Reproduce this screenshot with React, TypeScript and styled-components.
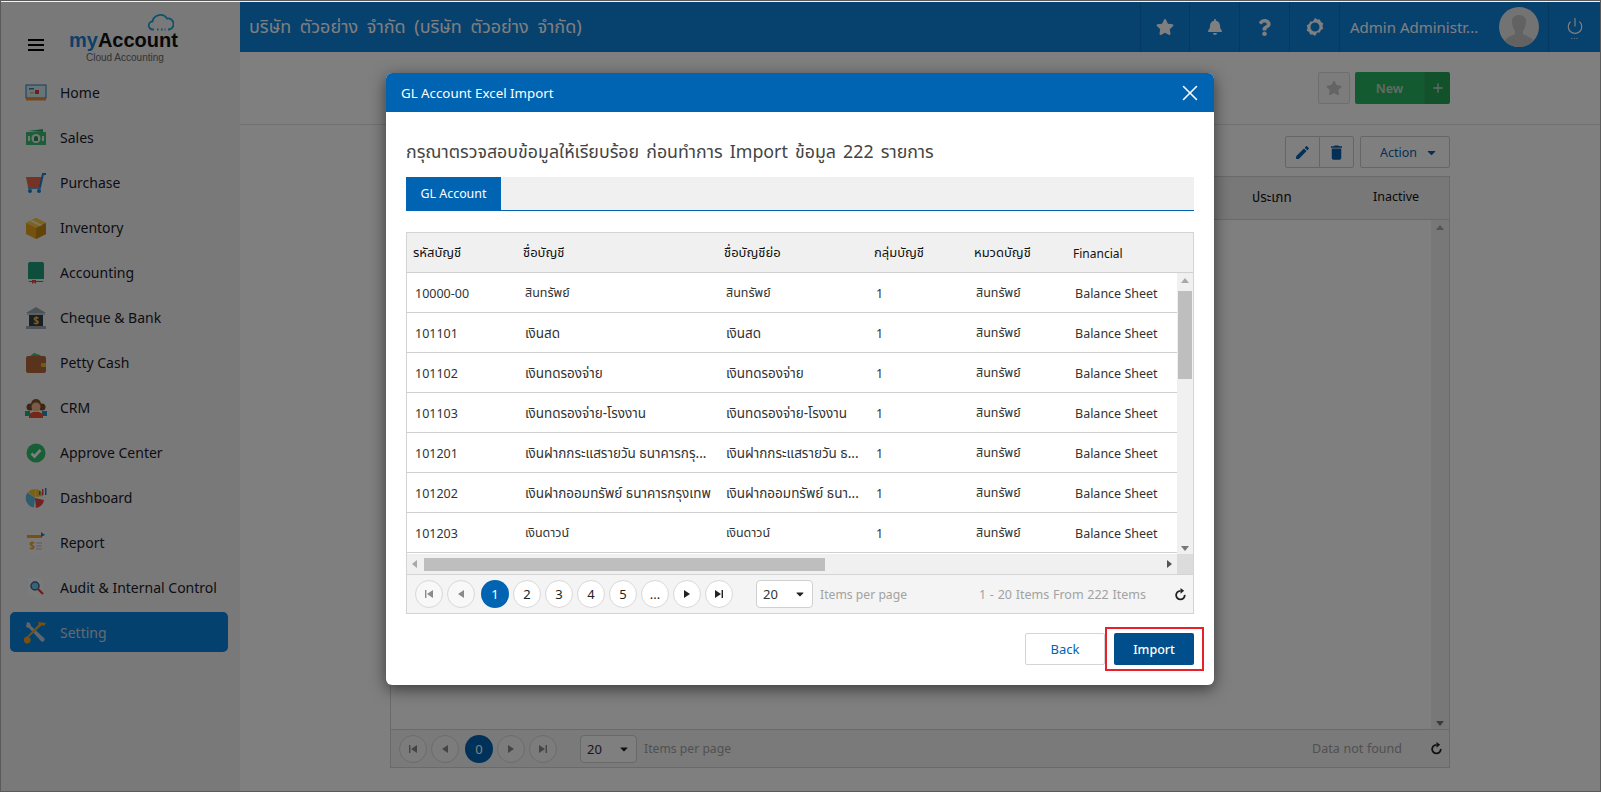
import React from "react";
import styled, { createGlobalStyle, css } from "styled-components";
import { FaStar, FaBell, FaQuestion, FaCaretDown } from "react-icons/fa";
import { MdEdit, MdDelete, MdAdd } from "react-icons/md";
import { Power, X } from "lucide-react";

const FONT = `"Noto Sans", "Noto Sans Thai", "Open Sans", "DejaVu Sans", sans-serif`;

const Global = createGlobalStyle`
  html, body { margin: 0; padding: 0; height: 792px; overflow: hidden; background: #fff; }
  * { box-sizing: border-box; }
  body { font-family: ${FONT}; font-size: 13px; color: #333; }
`;

const Frame = styled.div`
  width: 1601px; height: 792px; display: flex; flex-direction: column;
  border: 1px solid #5a5a5a; background: #fff; overflow: hidden;
`;
const Strip = styled.div`height: 1px; flex: none; background: #f4f4f4;`;
const Shell = styled.div`position: relative; flex: 1; display: flex; min-height: 0;`;
const Overlay = styled.div`position: absolute; inset: 0; background: rgba(0,0,0,.5); z-index: 5;`;

const Side = styled.aside`width: 239px; flex: none; background: #f3f3f3; display: flex; flex-direction: column; padding: 0 12px 0 9px;`;
const Brand = styled.div`height: 68px; display: flex; align-items: center; padding-left: 18px; flex: none;`;
const Burger = styled.div`
  width: 16px; height: 12px; margin-top: 17px; flex: none;
  border-top: 2px solid #000; border-bottom: 2px solid #000; position: relative;
  &::after { content: ""; position: absolute; left: 0; right: 0; top: 3px; height: 2px; background: #000; }
`;
const Logo = styled.div`position: relative; margin-left: 25px; margin-top: 24px; width: 112px; height: 40px;`;
const LogoName = styled.div`font: bold 20px/24px "Liberation Sans", sans-serif; color: #111; white-space: nowrap; span { color: #1a7fd0; }`;
const LogoSub = styled.div`font: 10px/12px "Liberation Sans", sans-serif; color: #666; padding-left: 17px; white-space: nowrap;`;
const CloudMark = styled.svg`position: absolute; left: 79px; top: -15px;`;
const Nav = styled.nav`display: flex; flex-direction: column; flex: none;`;
const NavItem = styled.div<{ $on?: boolean }>`
  height: 45px; display: flex; align-items: center; padding-left: 14px; gap: 12px;
  font-size: 14px; color: #1a1a2a; border-radius: 5px; white-space: nowrap;
  ${p => p.$on && css`height: 40px; margin-top: 2px; background: #0a82de; color: #c8d6e0;`}
`;
const NavIcon = styled.svg`width: 24px; height: 24px; flex: none;`;

const Main = styled.main`flex: 1; min-width: 0; display: flex; flex-direction: column; background: #fff;`;
const Top = styled.header`height: 50px; flex: none; background: #0e82dc; display: flex; align-items: stretch;`;
const Company = styled.div`flex: 1; min-width: 0; display: flex; align-items: center; padding: 0 0 0 9px; font-size: 18px; word-spacing: 4px; color: #fff; white-space: nowrap;`;
const TopBtn = styled.div<{ $w: number }>`
  width: ${p => p.$w}px; flex: none; border-left: 1px solid #0b72c4; display: flex; align-items: center; justify-content: center; color: #fff;
`;
const UserBox = styled.div`width: 210px; flex: none; border-left: 1px solid #0b72c4; border-right: 1px solid #0b72c4; display: flex; align-items: center; padding-left: 10px; color: #fff; font-size: 15px; white-space: nowrap;`;
const Avatar = styled.svg`width: 40px; height: 40px; margin-left: auto; margin-right: 9px; border-radius: 50%; flex: none;`;
const PowerBox = styled.div`width: 51px; flex: none; display: flex; flex-direction: column; align-items: center; justify-content: center; color: #fff;`;
const Dots = styled.span`font-size: 8px; line-height: 4px; letter-spacing: .5px; margin-top: -1px;`;

const Bar = styled.div`height: 73px; flex: none; border-bottom: 1px solid #e3e3e3; display: flex; justify-content: flex-end; align-items: flex-start; padding: 20px 150px 0 0;`;
const FavBtn = styled.div`width: 32px; height: 32px; border: 1px solid #ddd; background: #f8f8f8; border-radius: 2px; color: #c9c9c9; display: flex; align-items: center; justify-content: center; margin-right: 5px;`;
const NewBtn = styled.div`width: 70px; height: 32px; background: #26b561; color: #c9d5c9; font-weight: 600; font-size: 12.5px; display: flex; align-items: center; justify-content: center; border-radius: 2px 0 0 2px; border-right: 1px solid #2ea760;`;
const PlusBtn = styled.div`width: 25px; height: 32px; background: #22a456; color: #c9d5c9; display: flex; align-items: center; justify-content: center; border-radius: 0 2px 2px 0;`;

const Content = styled.div`flex: 1; padding: 11px 150px 0; display: flex; flex-direction: column; min-height: 0;`;
const Tools = styled.div`height: 32px; flex: none; display: flex; justify-content: flex-end;`;
const IconBtn = styled.div<{ $last?: boolean }>`
  width: 35px; height: 32px; border: 1px solid #ccc; color: #0a5ea8; display: flex; align-items: center; justify-content: center;
  margin-left: ${p => p.$last ? "-1px" : "0"}; border-radius: ${p => p.$last ? "0 2px 2px 0" : "2px 0 0 2px"};
`;
const ActionBtn = styled.div`width: 90px; height: 32px; margin-left: 6px; border: 1px solid #ccc; border-radius: 2px; color: #0a5ea8; display: flex; align-items: center; justify-content: flex-end; gap: 8px; padding-right: 11px; font-size: 12.5px;`;
const BackTable = styled.div`height: 592px; margin-top: 8px; flex: none; border: 1px solid #d4d4d4; display: flex; flex-direction: column;`;
const BackHead = styled.div`height: 43px; flex: none; background: #f0f0f0; border-bottom: 1px solid #d4d4d4; position: relative; color: #111;`;
const BackCol = styled.span<{ $x: number; $latin?: boolean }>`position: absolute; left: ${p => p.$x}px; top: 11px; font-size: ${p => p.$latin ? "12.5px" : "13.5px"};`;
const BackBody = styled.div`flex: 1; display: flex; justify-content: flex-end; min-height: 0;`;
const VBar = styled.div<{ $w?: number }>`width: ${p => p.$w ?? 16}px; flex: none; background: #f0f0f0; display: flex; flex-direction: column; align-items: center; justify-content: space-between; padding: 5px 0 3px;`;
const Thumb = styled.div`width: 14px; height: 88px; background: #bebebe; margin-top: 8px; margin-bottom: auto;`;
const Tri = styled.i<{ $d: "u" | "d" | "l" | "r"; $end?: boolean }>`
  width: 0; height: 0; flex: none; display: block; border: 4px solid transparent;
  ${p => p.$end && css`margin-left: auto;`}
  ${p => p.$d === "u" && css`border-top: 0; border-bottom: 5px solid #a8a8a8;`}
  ${p => p.$d === "d" && css`border-bottom: 0; border-top: 5px solid #777;`}
  ${p => p.$d === "l" && css`border-left: 0; border-right: 5px solid #a8a8a8;`}
  ${p => p.$d === "r" && css`border-right: 0; border-left: 5px solid #555;`}
`;

const Pager = styled.div<{ $line?: boolean }>`height: 38px; flex: none; background: #f4f4f4; display: flex; align-items: center; padding: 0 6px 0 8px; gap: 4px; ${p => p.$line && css`border-top: 1px solid #d4d4d4;`}`;
const Dot = styled.div<{ $on?: boolean; $off?: boolean }>`
  width: 28px; height: 28px; border-radius: 50%; flex: none; display: flex; align-items: center; justify-content: center; font-size: 13px;
  background: ${p => p.$on ? "#0064b2" : "#fff"}; color: ${p => p.$on ? "#fff" : p.$off ? "#8a8a8a" : "#222"};
  border: ${p => p.$on ? "0" : "1px solid #d8d8d8"}; margin-left: ${p => p.$on ? "2px" : "0"};
  ${p => p.$off && css`background: #f8f8f8;`}
`;
const Sel = styled.div`width: 57px; height: 28px; margin-left: 19px; border: 1px solid #d0d0d0; border-radius: 4px; background: #fff; display: flex; align-items: center; justify-content: space-between; padding: 0 6px; font-size: 13px; color: #333; flex: none;`;
const PerPage = styled.span`color: #a2a2a2; font-size: 12.2px; margin-left: 3px; white-space: nowrap;`;
const Summary = styled.span`margin-left: auto; color: #a2a2a2; font-size: 12.5px; word-spacing: .5px; white-space: nowrap;`;
const Reload = styled.svg`margin-left: 24px; flex: none;`;

const Modal = styled.section`position: absolute; left: 385px; top: 71px; width: 828px; height: 612px; background: #fff; border-radius: 6px; overflow: hidden; z-index: 10; box-shadow: 0 4px 16px rgba(0,0,0,.55); display: flex; flex-direction: column;`;
const MHead = styled.div`height: 39px; flex: none; background: #0064b2; color: #fff; font-size: 13.3px; display: flex; align-items: center; justify-content: space-between; padding: 0 11px 0 15px;`;
const MBody = styled.div`flex: 1; padding: 0 20px; display: flex; flex-direction: column; min-height: 0;`;
const Heading = styled.h2`margin: 24px 0 0; height: 30px; font-weight: 400; font-size: 17.8px; word-spacing: 2.5px; line-height: 30px; color: #444; white-space: nowrap;`;
const Tabs = styled.div`height: 34px; margin-top: 11px; flex: none; background: #f0f0f0; border-bottom: 1px solid #0064b2; display: flex;`;
const Tab = styled.div`width: 95px; background: #0064b2; color: #fff; font-size: 12.4px; display: flex; align-items: center; justify-content: center;`;
const Grid = styled.div`height: 382px; margin-top: 21px; flex: none; border: 1px solid #d4d4d4; display: flex; flex-direction: column;`;
const COLS = "110px 201px 150px 100px 99px 1fr";
const HeadRow = styled.div`height: 40px; flex: none; background: #f0f0f0; border-bottom: 1px solid #d0d0d0; display: grid; grid-template-columns: ${COLS}; align-items: center; color: #111; padding: 1px 0 0 6px;`;
const HeadCell = styled.span<{ $latin?: boolean }>`font-size: ${p => p.$latin ? "12px" : "13px"};`;
const BodyWrap = styled.div`flex: 1; display: flex; min-height: 0;`;
const Rows = styled.div`flex: 1; min-width: 0;`;
const Row = styled.div`height: 40px; border-bottom: 1px solid #d0d0d0; display: grid; grid-template-columns: ${COLS}; align-items: center; padding: 2px 0 0 8px; color: #333;`;
const Cell = styled.div<{ $big?: boolean }>`white-space: nowrap; overflow: hidden; font-size: ${p => p.$big ? "13.5px" : "12.5px"};`;
const HBar = styled.div`height: 21px; flex: none; display: flex; align-items: center; background: #f0f0f0; border-bottom: 1px solid #d4d4d4;`;
const HTrack = styled.div`flex: 1; display: flex; align-items: center; padding: 0 5px; gap: 7px;`;
const HThumb = styled.div`width: 401px; height: 13px; background: #bebebe;`;
const Corner = styled.div`width: 16px; height: 100%; background: #dcdcdc; flex: none;`;
const Foot = styled.div`display: flex; justify-content: flex-end; gap: 9px; padding-top: 19px; position: relative;`;
const BackBtn = styled.div`width: 80px; height: 32px; border: 1px solid #d4d4d4; color: #0064b2; display: flex; align-items: center; justify-content: center; font-size: 13px; border-radius: 2px;`;
const ImportBtn = styled.div`width: 80px; height: 32px; background: #004f8c; color: #fff; display: flex; align-items: center; justify-content: center; font-size: 12.5px; font-weight: 500; border-radius: 2px;`;
const RedMark = styled.div`position: absolute; right: -10px; top: 13px; width: 99px; height: 44px; border: 2px solid #e8202a;`;

const Icon = ({ k }: { k: string }) => {
  const m: Record<string, React.ReactNode> = {
    Home: <><rect x="2" y="4" width="20" height="13" fill="#cfe8f5" stroke="#2a7ab8" /><rect x="2" y="17" width="20" height="2.5" fill="#e8913a" /><rect x="5" y="7" width="5" height="1.5" fill="#2a7ab8" /><rect x="11" y="9" width="4" height="4" fill="#d83a3a" /><rect x="6" y="11" width="4" height="1.5" fill="#e8b33a" /></>,
    Sales: <><path d="M4 5l15-2v3z" fill="#2fa564" /><rect x="2" y="6" width="20" height="13" fill="#3dba72" /><circle cx="12" cy="12.5" r="4.5" fill="#e4f3ea" /><path d="M10 15v-3a2 2 0 014 0v3z" fill="#2c8a55" /><rect x="4" y="10" width="2" height="5" fill="#e4f3ea" /><rect x="18" y="10" width="2" height="5" fill="#e4f3ea" /></>,
    Purchase: <><path d="M2 6h16l-2 10H4z" fill="#e8664a" /><path d="M16 16l3-13h3" fill="none" stroke="#1f7ed0" strokeWidth="2" /><path d="M4 17h13" stroke="#1f7ed0" strokeWidth="1.5" /><circle cx="6" cy="20" r="2" fill="#1f7ed0" /><circle cx="15" cy="20" r="2" fill="#1f7ed0" /></>,
    Inventory: <><path d="M12 2l10 5v11l-10 5-10-5V7z" fill="#e8a21f" /><path d="M2 7l10 5 10-5-10-5z" fill="#f7c948" /><path d="M12 12v11l10-5V7z" fill="#c98714" /><path d="M6 5l10 5 2-1L8 4z" fill="#fff1c0" /></>,
    Accounting: <><rect x="4" y="1" width="16" height="20" rx="2" fill="#1f9a78" /><rect x="4" y="18" width="16" height="2" fill="#e8f2ee" /><path d="M8 19h4v4l-2-1.5L8 23z" fill="#e04a4a" /></>,
    "Cheque & Bank": <><path d="M12 1l10 6H2z" fill="#9aa5ad" /><rect x="3" y="7" width="18" height="2" fill="#b9c2c8" /><rect x="5" y="9" width="14" height="11" fill="#33414a" /><rect x="2" y="20" width="20" height="3" fill="#9aa5ad" /><text x="12" y="18" fontSize="10" fontWeight="700" textAnchor="middle" fill="#f0c030">$</text></>,
    "Petty Cash": <><path d="M5 6l5-4 6 2 2 2z" fill="#3dba72" /><rect x="2" y="5" width="20" height="17" rx="2" fill="#b5673a" /><rect x="17" y="12" width="5" height="4" rx="1" fill="#e8b33a" /></>,
    CRM: <><circle cx="6" cy="11" r="3.5" fill="#7a4a2a" /><circle cx="18" cy="11" r="3.5" fill="#7a4a2a" /><rect x="1" y="15" width="5" height="5" fill="#1fb07a" /><rect x="18" y="15" width="5" height="5" fill="#1f8fd0" /><circle cx="12" cy="8" r="5" fill="#8a5230" /><circle cx="12" cy="11" r="4.5" fill="#f0b98a" /><path d="M5 22v-4l4-2h6l4 2v4z" fill="#e8502a" /></>,
    "Approve Center": <><circle cx="12" cy="12" r="9.5" fill="#2fbf6c" /><path d="M7.5 12.5l3 3 6-6.5" fill="none" stroke="#fff" strokeWidth="2.6" /></>,
    Dashboard: <><path d="M11 12V3a9.5 9.5 0 00-7 3z" fill="#f0c030" /><path d="M11 12L3.5 6.5A9.5 9.5 0 0010 21.5z" fill="#5ab8dc" /><path d="M11 12l1 10a9.5 9.5 0 008-8z" fill="#e8443f" /><path d="M11.5 3v8l8-1a9 9 0 00-8-7z" fill="#f0c030" /><rect x="15" y="5" width="1.5" height="4" fill="#1f7ed0" /><rect x="18" y="3" width="1.5" height="6" fill="#e8443f" /><rect x="21" y="2" width="1.5" height="7" fill="#1f7ed0" /></>,
    Report: <><rect x="4" y="3" width="16" height="20" fill="#f4f4f4" /><rect x="3" y="4" width="15" height="3" fill="#f0a020" /><path d="M17 1l4 3-4 2z" fill="#1f7ed0" /><text x="8" y="18" fontSize="10" fontWeight="700" textAnchor="middle" fill="#f0a020">$</text><path d="M12 12h6M12 15h6M12 18h6" stroke="#bbb" /></>,
    "Audit & Internal Control": <><rect x="4" y="2" width="15" height="20" fill="#f6f6f6" /><circle cx="11" cy="10" r="4" fill="#7ec4e4" stroke="#2a6a9a" strokeWidth="1.5" /><path d="M14 13l5 5" stroke="#d83a3a" strokeWidth="2.2" /></>,
    Setting: <><path d="M3 2l3 1 1 3 13 12a2 2 0 01-3 3L5 8 2 7z" fill="#c5ccd2" /><path d="M22 3l-2 3-2-1L5 17a3.500 3.500 0 11-2-.5L15 4l-1-2z" fill="#f0a020" /></>,
  };
  return <NavIcon viewBox="0 0 24 24">{m[k]}</NavIcon>;
};

const SkipIcon = ({ dir, color = "#8a8a8a" }: { dir: "l" | "r"; color?: string }) => (
  <svg width="10" height="10" viewBox="0 0 10 10">
    {dir === "l" ? <path d="M1 1h1.400v8H1zM9 1v8L3 5z" fill={color} /> : <path d="M9 1H7.600v8H9zM1 1v8l6-4z" fill={color} />}
  </svg>
);
const StepIcon = ({ dir, color = "#8a8a8a" }: { dir: "l" | "r"; color?: string }) => (
  <svg width="8" height="10" viewBox="0 0 8 10"><path d={dir === "l" ? "M7 1v8L1 5z" : "M1 1v8l6-4z"} fill={color} /></svg>
);
const Gear = () => (
  <svg width="20" height="20" viewBox="0 0 20 20"><path fillRule="evenodd" d="M10 1l2.200 1.600 2.700-.2 1 2.500 2.300 1.400-.7 2.700.7 2.700-2.300 1.400-1 2.500-2.700-.2L10 19l-2.200-1.600-2.700.2-1-2.500-2.300-1.400.7-2.700-.7-2.700 2.300-1.400 1-2.500 2.700.2zM10 5.500a4.500 4.500 0 100 9 4.500 4.500 0 000-9z" fill="#fff" /></svg>
);
const ReloadIcon = () => (
  <Reload width="13" height="13" viewBox="0 0 16 16">
    <path d="M8 3.500a5.300 5.300 0 105.200 5" fill="none" stroke="#222" strokeWidth="2.200" />
    <path d="M8 0l4.500 3.500L8 7z" fill="#222" />
  </Reload>
);

const NAV = ["Home", "Sales", "Purchase", "Inventory", "Accounting", "Cheque & Bank", "Petty Cash", "CRM", "Approve Center", "Dashboard", "Report", "Audit & Internal Control", "Setting"];
const A = "สินทรัพย์";
const ROWS = [
  ["10000-00", A, A],
  ["101101", "เงินสด", "เงินสด"],
  ["101102", "เงินทดรองจ่าย", "เงินทดรองจ่าย"],
  ["101103", "เงินทดรองจ่าย-โรงงาน", "เงินทดรองจ่าย-โรงงาน"],
  ["101201", "เงินฝากกระแสรายวัน ธนาคารกรุ...", "เงินฝากกระแสรายวัน ธ..."],
  ["101202", "เงินฝากออมทรัพย์ ธนาคารกรุงเทพ", "เงินฝากออมทรัพย์ ธนา..."],
  ["101203", "เงินดาวน์", "เงินดาวน์"],
];
const isBig = (t: string) => t !== A && t !== "เงินดาวน์";

export default function App() {
  return (
    <>
      <Global />
      <Frame>
        <Strip />
        <Shell>
          <Side>
            <Brand>
              <Burger />
              <Logo>
                <CloudMark width="26" height="18" viewBox="0 0 26 18">
                  <path d="M6 16.500H5a4 4 0 01-.5-8A8 8 0 0119 5.500a5.500 5.500 0 012 11h-1M9 16.500h1.500M13 16.500h1.500M16.500 16.500h1" fill="none" stroke="#1ea0d8" strokeWidth="1.800" />
                </CloudMark>
                <LogoName><span>my</span>Account</LogoName>
                <LogoSub>Cloud Accounting</LogoSub>
              </Logo>
            </Brand>
            <Nav>
              {NAV.map(n => (
                <NavItem key={n} $on={n === "Setting"}><Icon k={n} />{n}</NavItem>
              ))}
            </Nav>
          </Side>
          <Main>
            <Top>
              <Company>บริษัท ตัวอย่าง จำกัด (บริษัท ตัวอย่าง จำกัด)</Company>
              <TopBtn $w={49}><FaStar size={18} /></TopBtn>
              <TopBtn $w={50}><FaBell size={16} /></TopBtn>
              <TopBtn $w={50}><FaQuestion size={17} /></TopBtn>
              <TopBtn $w={50}><Gear /></TopBtn>
              <UserBox>Admin Administr...
                <Avatar viewBox="0 0 40 40">
                  <rect width="40" height="40" fill="#e6e6e6" />
                  <path d="M13 14c0-8 14-8 14 0 0 5-2 9-3 10v3c3 2 9 3 11 8v5H5v-5c2-5 8-6 11-8v-3c-1-1-3-5-3-10z" fill="#c4c4c4" />
                </Avatar>
              </UserBox>
              <PowerBox><Power size={18} strokeWidth={1.6} /><Dots>...</Dots></PowerBox>
            </Top>
            <Bar>
              <FavBtn><FaStar size={16} /></FavBtn>
              <NewBtn>New</NewBtn>
              <PlusBtn><MdAdd size={16} /></PlusBtn>
            </Bar>
            <Content>
              <Tools>
                <IconBtn><MdEdit size={17} /></IconBtn>
                <IconBtn $last><MdDelete size={19} /></IconBtn>
                <ActionBtn>Action <FaCaretDown size={13} /></ActionBtn>
              </Tools>
              <BackTable>
                <BackHead>
                  <BackCol $x={861}>ประเภท</BackCol>
                  <BackCol $x={982} $latin>Inactive</BackCol>
                </BackHead>
                <BackBody>
                  <VBar $w={18}><Tri $d="u" /><Tri $d="d" /></VBar>
                </BackBody>
                <Pager $line>
                  <Dot $off><SkipIcon dir="l" /></Dot>
                  <Dot $off><StepIcon dir="l" /></Dot>
                  <Dot $on>0</Dot>
                  <Dot $off><StepIcon dir="r" /></Dot>
                  <Dot $off><SkipIcon dir="r" /></Dot>
                  <Sel>20 <FaCaretDown size={12} color="#222" /></Sel>
                  <PerPage>Items per page</PerPage>
                  <Summary>Data not found</Summary>
                  <ReloadIcon />
                </Pager>
              </BackTable>
            </Content>
          </Main>
          <Overlay />
          <Modal>
            <MHead>GL Account Excel Import <X size={26} strokeWidth={1.4} /></MHead>
            <MBody>
              <Heading>กรุณาตรวจสอบข้อมูลให้เรียบร้อย ก่อนทำการ Import ข้อมูล 222 รายการ</Heading>
              <Tabs><Tab>GL Account</Tab></Tabs>
              <Grid>
                <HeadRow>
                  <HeadCell>รหัสบัญชี</HeadCell><HeadCell>ชื่อบัญชี</HeadCell><HeadCell>ชื่อบัญชีย่อ</HeadCell><HeadCell>กลุ่มบัญชี</HeadCell><HeadCell>หมวดบัญชี</HeadCell><HeadCell $latin>Financial</HeadCell>
                </HeadRow>
                <BodyWrap>
                  <Rows>
                    {ROWS.map(r => (
                      <Row key={r[0]}>
                        <Cell>{r[0]}</Cell><Cell $big={isBig(r[1])}>{r[1]}</Cell><Cell $big={isBig(r[2])}>{r[2]}</Cell><Cell>1</Cell><Cell>{A}</Cell><Cell>Balance Sheet</Cell>
                      </Row>
                    ))}
                  </Rows>
                  <VBar><Tri $d="u" /><Thumb /><Tri $d="d" /></VBar>
                </BodyWrap>
                <HBar>
                  <HTrack><Tri $d="l" /><HThumb /><Tri $d="r" $end /></HTrack>
                  <Corner />
                </HBar>
                <Pager>
                  <Dot $off><SkipIcon dir="l" /></Dot>
                  <Dot $off><StepIcon dir="l" /></Dot>
                  <Dot $on>1</Dot>
                  <Dot>2</Dot><Dot>3</Dot><Dot>4</Dot><Dot>5</Dot><Dot>...</Dot>
                  <Dot><StepIcon dir="r" color="#222" /></Dot>
                  <Dot><SkipIcon dir="r" color="#222" /></Dot>
                  <Sel>20 <FaCaretDown size={12} color="#222" /></Sel>
                  <PerPage>Items per page</PerPage>
                  <Summary>1 - 20 Items From 222 Items</Summary>
                  <ReloadIcon />
                </Pager>
              </Grid>
              <Foot>
                <BackBtn>Back</BackBtn>
                <ImportBtn>Import</ImportBtn>
                <RedMark />
              </Foot>
            </MBody>
          </Modal>
        </Shell>
      </Frame>
    </>
  );
}
